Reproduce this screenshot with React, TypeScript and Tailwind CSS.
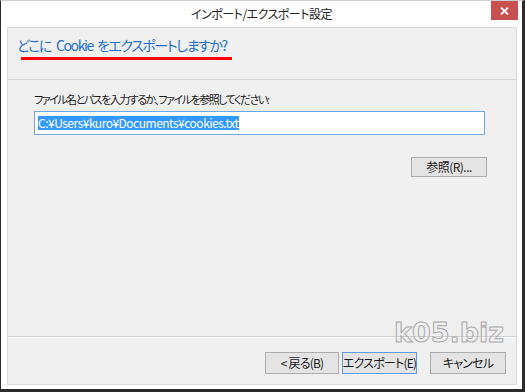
import React from "react";

const jp = "font-['Meiryo_UI','Noto_Sans_CJK_JP',sans-serif] [font-feature-settings:'palt']";

function Btn({ children, def, w }: { children: React.ReactNode; def?: boolean; w: string }) {
  return (
    <div
      className={`${w} h-[22px] flex items-center justify-center whitespace-nowrap text-[12px] tracking-[-0.8px] text-[#1a1a1a] bg-[#e4e4e4] border ${
        def ? "border-[#5b9de0]" : "border-[#adadad]"
      } ${jp}`}
    >
      {children}
    </div>
  );
}

export default function App() {
  return (
    <div className="w-[525px] h-[392px] bg-white flex flex-col relative border-l border-l-[#2b2b2b] border-t border-t-[#cfcfcf] border-r-[3px] border-r-[#2b2b2b] border-b-[3px] border-b-[#2b2b2b]">
      {/* title bar */}
      <div className={`h-[26px] flex items-center justify-center text-[12px] tracking-[-0.5px] text-[#222] ${jp}`}>
        インポート/エクスポート設定
      </div>
      <div className="absolute top-0 right-[4px] w-[27px] h-[19px] bg-[#c75050] flex items-center justify-center">
        <svg width="9" height="8" viewBox="0 0 9 8">
          <path d="M1 0.5 L8 7.5 M8 0.5 L1 7.5" stroke="#fff" strokeWidth="1.8" />
        </svg>
      </div>

      {/* panel */}
      <div className="flex-1 ml-[6px] mr-[5px] mb-[4px] border border-[#dadada] bg-[#f0f0f0] flex flex-col">
        <div className="h-[52px] border-b border-b-[#d5d5d5] pt-[7px]">
          <div className={`pl-[9px] h-[20px] leading-[20px] whitespace-nowrap text-[14px] tracking-[-1.4px] text-[#1f6fcf] ${jp}`}>
            どこに<span className="ml-[5px] mr-[4px]">Cookie</span>をエクスポートしますか?
          </div>
          <div className="ml-[13px] mt-[2px] w-[211px] h-[3px] bg-[#ff0000]" />
        </div>

        <div className="flex-1 pl-[26px] pr-[29px] pt-[11px] flex flex-col">
          <div className={`h-[16px] leading-[16px] whitespace-nowrap text-[11px] tracking-[-1.5px] text-[#1a1a1a] ${jp}`}>
            ファイル名とパスを入力するか、ファイルを参照してください:
          </div>
          <div className="mt-[4px] w-[451px] h-[24px] bg-white border border-[#6fa8e3] flex items-center pl-[3px]">
            <span className={`bg-[#3399ff] text-white text-[12px] tracking-[-0.5px] leading-[14px] h-[14px] whitespace-nowrap ${jp}`}>
              C:¥Users¥kuro¥Documents¥cookies.txt
            </span>
          </div>
          <div className="mt-[22px] flex justify-end">
            <div className={`w-[76px] h-[20px] flex items-center justify-center text-[12px] tracking-[-0.5px] text-[#1a1a1a] bg-[#e4e4e4] border border-[#adadad] ${jp}`}>
              参照(R)...
            </div>
          </div>
        </div>

        <div className="h-[48px] border-t border-t-[#d0d0d0] shadow-[inset_0_1px_0_#ffffff] pt-[15px] pr-[10px] flex justify-end">
          <Btn w="w-[74px]">&lt; 戻る(B)</Btn>
          <div className="w-[3px]" />
          <Btn w="w-[75px]" def>
            エクスポート(E)
          </Btn>
          <div className="w-[13px]" />
          <Btn w="w-[76px]">キャンセル</Btn>
        </div>
      </div>

      {/* watermark */}
      <div className="absolute left-[393px] top-[318px] text-[27px] leading-[28px] font-bold font-['DejaVu_Sans',sans-serif] text-transparent [-webkit-text-stroke:1px_#a8a8a8] pointer-events-none">
        k05.biz
      </div>
    </div>
  );
}
